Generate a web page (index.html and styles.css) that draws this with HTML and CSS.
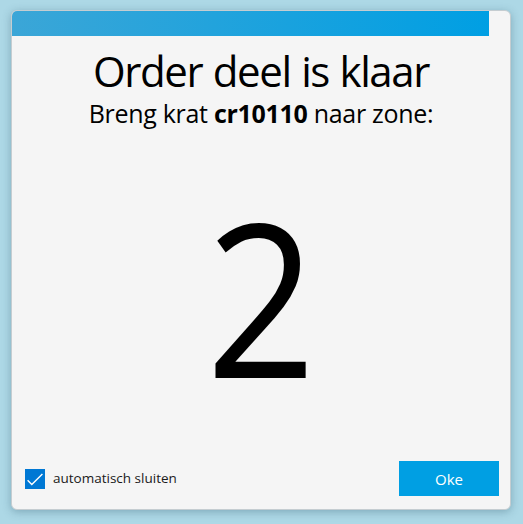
FILE: index.html
```html
<!DOCTYPE html>
<html lang="nl">
<head>
<meta charset="utf-8">
<title>Order deel is klaar</title>
<link rel="stylesheet" href="styles.css">
</head>
<body>
<div class="window">
  <div class="progress"><div class="progress-fill"></div></div>
  <div class="content">
    <h1 class="title">Order deel is klaar</h1>
    <p class="subtitle">Breng krat <b>cr10110</b> naar zone:</p>
    <div class="zone">2</div>
  </div>
  <div class="footer">
    <label class="check">
      <span class="box">
        <svg width="20" height="20" viewBox="0 0 20 20"><path d="M2.6 11.3 L6.8 15.4 L17.4 5" fill="none" stroke="#fff" stroke-width="1.4"/></svg>
      </span>
      <span class="check-label">automatisch sluiten</span>
    </label>
    <button class="ok">Oke</button>
  </div>
</div>
</body>
</html>
```

FILE: styles.css
```css
html, body {
  margin: 0;
  padding: 0;
}
body {
  background: #add8e6;
  width: 523px;
  height: 524px;
  overflow: hidden;
  font-family: "Open Sans", "Noto Sans", sans-serif;
  color: #000;
}
.window {
  box-sizing: border-box;
  margin: 10px 0 0 11px;
  width: 500px;
  height: 500px;
  background: #f5f5f5;
  border: 1px solid #c5cdd1;
  border-radius: 6px;
  box-shadow: 0 2px 8px rgba(40, 80, 100, 0.35);
  display: flex;
  flex-direction: column;
  overflow: hidden;
}
.progress {
  height: 25px;
  flex: none;
}
.progress-fill {
  width: 477px;
  height: 100%;
  background: linear-gradient(to right, #3ba6d7, #009fe3);
}
.content {
  flex: 1;
  display: flex;
  flex-direction: column;
  align-items: center;
}
.title {
  margin: 10px 0 0;
  font-weight: 400;
  font-size: 42px;
  line-height: 50px;
  letter-spacing: -1.4px;
  word-spacing: 1px;
}
.subtitle {
  margin: 0;
  font-size: 25px;
  line-height: 34px;
  letter-spacing: -0.3px;
}
.subtitle b {
  font-weight: 700;
}
.zone {
  margin-top: 50px;
  font-size: 214px;
  line-height: 230px;
  letter-spacing: 0;
  transform: scaleX(0.9);
}
.footer {
  flex: none;
  display: flex;
  justify-content: space-between;
  align-items: center;
  padding: 0 11px 13px 13px;
}
.check {
  display: flex;
  align-items: center;
  gap: 8px;
}
.box {
  width: 20px;
  height: 20px;
  background: #0078d4;
  display: block;
}
.box svg {
  display: block;
}
.check-label {
  font-size: 13.5px;
  color: #1a1a1a;
  margin-top: -2px;
}
.ok {
  width: 100px;
  height: 35px;
  border: 0;
  border-radius: 0;
  background: #009fe3;
  color: #fff;
  font-family: "Open Sans", "Noto Sans", sans-serif;
  font-size: 15px;
  padding: 0;
}
```
